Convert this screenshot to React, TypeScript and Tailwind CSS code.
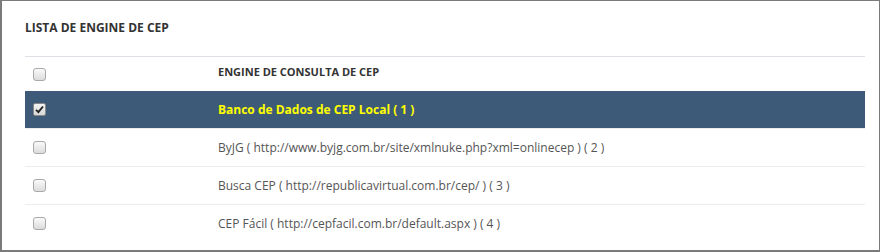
import React from "react";

const rows = [
  { label: "Banco de Dados de CEP Local ( 1 )", checked: true },
  { label: "ByJG ( http://www.byjg.com.br/site/xmlnuke.php?xml=onlinecep ) ( 2 )", checked: false },
  { label: "Busca CEP ( http://republicavirtual.com.br/cep/ ) ( 3 )", checked: false },
  { label: "CEP Fácil ( http://cepfacil.com.br/default.aspx ) ( 4 )", checked: false },
];

function Check({ checked }: { checked: boolean }) {
  if (checked) {
    return (
      <span className="flex h-[13px] w-[13px] items-center justify-center rounded-[2px] border border-[#8a8a8a] bg-gradient-to-b from-[#f4f4f4] to-[#d8d8d8]">
        <svg width="9" height="9" viewBox="0 0 9 9">
          <path d="M1 4.8 L3.4 7.2 L8 1.5" fill="none" stroke="#222" strokeWidth="1.9" />
        </svg>
      </span>
    );
  }
  return (
    <span className="block h-[13px] w-[13px] rounded-[3px] border border-[#a9a9a9] bg-gradient-to-b from-[#fafafa] to-[#dcdcdc]" />
  );
}

export default function App() {
  return (
    <div
      className="h-[252px] w-[880px] border-t border-r border-b-2 border-l-2 border-[#7b7b7b] bg-white px-[23px]"
      style={{ fontFamily: "'Open Sans', sans-serif" }}
    >
      <div className="flex h-[55px] items-center pb-[1px] text-[12px] font-bold text-[#333]">
        LISTA DE ENGINE DE CEP
      </div>
      <div className="w-[840px]">
        <div className="flex h-[35px] items-center border-t border-[#dde0e5]">
          <div className="w-[185px] pl-2">
            <Check checked={false} />
          </div>
          <div className="pb-[3px] pl-2 text-[11px] font-bold text-[#333]">ENGINE DE CONSULTA DE CEP</div>
        </div>
        {rows.map((r, i) => (
          <div
            key={i}
            className={
              r.checked
                ? "flex h-[37px] items-center bg-[#3d5a78]"
                : "flex h-[38px] items-center border-t border-[#ececec]"
            }
          >
            <div className="w-[185px] pl-2">
              <Check checked={r.checked} />
            </div>
            <div
              className={
                r.checked
                  ? "pl-2 text-[12px] font-bold text-[#ffff00]"
                  : "pl-2 text-[12px] text-[#555]"
              }
            >
              {r.label}
            </div>
          </div>
        ))}
      </div>
    </div>
  );
}
